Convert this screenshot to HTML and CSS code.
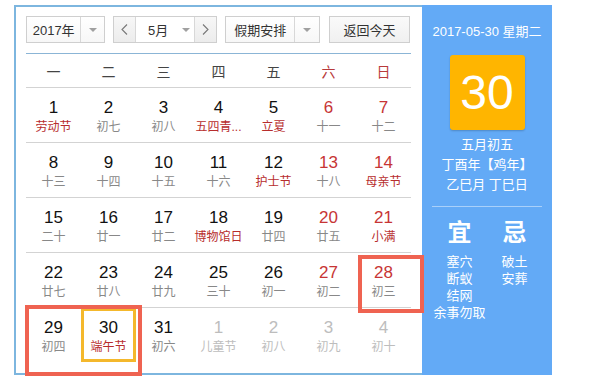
FILE: index.html
```html
<!DOCTYPE html>
<html lang="zh-CN">
<head>
<meta charset="UTF-8">
<title>万年历</title>
<link rel="stylesheet" href="styles.css">
</head>
<body>
<div class="calendar">
  <div class="cal-main">
    <div class="toolbar">
      <div class="select select-year">
        <span class="select-text">2017年</span>
        <span class="select-arrow"><i class="caret"></i></span>
      </div>
      <div class="month-group">
        <span class="nav-btn">
          <svg width="7" height="11" viewBox="0 0 7 11"><polyline points="6,0.5 1,5.5 6,10.5" fill="none" stroke="#777" stroke-width="1.1"/></svg>
        </span>
        <span class="month-select">
          <span class="month-text">5月</span>
          <i class="caret"></i>
        </span>
        <span class="nav-btn">
          <svg width="7" height="11" viewBox="0 0 7 11"><polyline points="1,0.5 6,5.5 1,10.5" fill="none" stroke="#777" stroke-width="1.1"/></svg>
        </span>
      </div>
      <div class="select select-holiday">
        <span class="select-text">假期安排</span>
        <span class="select-arrow"><i class="caret"></i></span>
      </div>
      <button type="button" class="today-btn">返回今天</button>
    </div>

    <div class="week-head">
      <span>一</span><span>二</span><span>三</span><span>四</span><span>五</span>
      <span class="weekend">六</span><span class="weekend">日</span>
    </div>

    <div class="days">
      <div class="day"><b>1</b><em class="fest">劳动节</em></div>
      <div class="day"><b>2</b><em>初七</em></div>
      <div class="day"><b>3</b><em>初八</em></div>
      <div class="day"><b>4</b><em class="fest">五四青...</em></div>
      <div class="day"><b>5</b><em class="fest">立夏</em></div>
      <div class="day weekend"><b>6</b><em>十一</em></div>
      <div class="day weekend"><b>7</b><em>十二</em></div>

      <div class="day"><b>8</b><em>十三</em></div>
      <div class="day"><b>9</b><em>十四</em></div>
      <div class="day"><b>10</b><em>十五</em></div>
      <div class="day"><b>11</b><em>十六</em></div>
      <div class="day"><b>12</b><em class="fest">护士节</em></div>
      <div class="day weekend"><b>13</b><em>十八</em></div>
      <div class="day weekend"><b>14</b><em class="fest">母亲节</em></div>

      <div class="day"><b>15</b><em>二十</em></div>
      <div class="day"><b>16</b><em>廿一</em></div>
      <div class="day"><b>17</b><em>廿二</em></div>
      <div class="day"><b>18</b><em class="fest">博物馆日</em></div>
      <div class="day"><b>19</b><em>廿四</em></div>
      <div class="day weekend"><b>20</b><em>廿五</em></div>
      <div class="day weekend"><b>21</b><em class="fest">小满</em></div>

      <div class="day"><b>22</b><em>廿七</em></div>
      <div class="day"><b>23</b><em>廿八</em></div>
      <div class="day"><b>24</b><em>廿九</em></div>
      <div class="day"><b>25</b><em>三十</em></div>
      <div class="day"><b>26</b><em>初一</em></div>
      <div class="day weekend"><b>27</b><em>初二</em></div>
      <div class="day weekend"><b>28</b><em>初三</em></div>

      <div class="day last-row"><b>29</b><em>初四</em></div>
      <div class="day last-row today"><b>30</b><em class="fest">端午节</em></div>
      <div class="day last-row"><b>31</b><em>初六</em></div>
      <div class="day last-row other"><b>1</b><em>儿童节</em></div>
      <div class="day last-row other"><b>2</b><em>初八</em></div>
      <div class="day last-row other"><b>3</b><em>初九</em></div>
      <div class="day last-row other"><b>4</b><em>初十</em></div>
    </div>
  </div>

  <div class="cal-side">
    <div class="side-date">2017-05-30 星期二</div>
    <div class="side-day">30</div>
    <div class="side-lunar">
      <p>五月初五</p>
      <p>丁酉年【鸡年】</p>
      <p>乙巳月 丁巳日</p>
    </div>
    <div class="side-line"></div>
    <div class="side-yiji">
      <div class="yiji-col">
        <div class="yiji-title">宜</div>
        <p>塞穴</p>
        <p>断蚁</p>
        <p>结网</p>
        <p>余事勿取</p>
      </div>
      <div class="yiji-col">
        <div class="yiji-title">忌</div>
        <p>破土</p>
        <p>安葬</p>
      </div>
    </div>
  </div>
</div>

<div class="mark mark-28"></div>
<div class="mark mark-week"></div>
</body>
</html>
```

FILE: styles.css
```css
body {
  margin: 0;
  background: #fff;
  font-family: "Liberation Sans", "Noto Sans CJK SC", sans-serif;
  color: #333;
}

.calendar {
  display: flex;
  margin: 5px 0 0 14px;
  width: 538px;
  height: 370px;
}

.cal-main {
  width: 385px;
  padding: 9px 11px 0 10px;
  border: 2px solid #7db6df;
  border-right: none;
}

/* toolbar */
.toolbar {
  display: flex;
  align-items: center;
  height: 27px;
  padding-bottom: 10px;
  border-bottom: 1px solid #8bb5d6;
  font-size: 13px;
}

.select {
  display: flex;
  height: 27px;
  box-sizing: border-box;
  border: 1px solid #cfcfcf;
  background: linear-gradient(#fff, #f7f7f7);
  margin-right: 8px;
}

.select-text {
  display: flex;
  align-items: center;
  justify-content: center;
}

.select-arrow {
  display: flex;
  align-items: center;
  justify-content: center;
  border-left: 1px solid #d8d8d8;
}

.select-year {
  width: 79px;
}

.select-year .select-text {
  width: 54px;
}

.select-year .select-arrow {
  width: 23px;
}

.select-holiday {
  width: 95px;
  margin-right: 9px;
}

.select-holiday .select-text {
  width: 69px;
}

.select-holiday .select-arrow {
  width: 24px;
}

.caret {
  width: 0;
  height: 0;
  border-left: 4px solid transparent;
  border-right: 4px solid transparent;
  border-top: 4px solid #a0a0a0;
}

.month-group {
  display: flex;
  height: 27px;
  box-sizing: border-box;
  border: 1px solid #cfcfcf;
  margin-right: 8px;
}

.nav-btn {
  display: flex;
  align-items: center;
  justify-content: center;
  width: 21px;
  background: linear-gradient(#f7f7f7, #ececec);
}

.month-select {
  display: flex;
  align-items: center;
  width: 58px;
  border-left: 1px solid #d8d8d8;
  border-right: 1px solid #d8d8d8;
  background: #fff;
}

.month-text {
  margin-left: 12px;
  margin-right: 14px;
}

.today-btn {
  width: 81px;
  height: 27px;
  padding: 0;
  border: 1px solid #cfcfcf;
  background: linear-gradient(#fafafa, #f0f0f0);
  font-family: inherit;
  font-size: 13px;
  color: #333;
}

/* week header */
.week-head {
  display: grid;
  grid-template-columns: repeat(7, 55px);
  height: 33px;
  border-bottom: 1px solid #d3d3d3;
  font-size: 14px;
  color: #444;
}

.week-head span {
  display: flex;
  align-items: center;
  justify-content: center;
}

.week-head .weekend {
  color: #b83a3a;
}

/* days */
.days {
  display: grid;
  grid-template-columns: repeat(7, 55px);
}

.day {
  display: flex;
  flex-direction: column;
  align-items: center;
  height: 54px;
  padding-top: 10px;
  box-sizing: border-box;
  border-bottom: 1px solid #d3d3d3;
  height: 55px;
}

.day.last-row {
  border-bottom: none;
  height: 54px;
}

.day b {
  font-weight: normal;
  font-size: 17px;
  line-height: 20px;
  color: #111;
}

.day em {
  font-style: normal;
  font-size: 12px;
  line-height: 18px;
  color: #888;
  white-space: nowrap;
}

.day em.fest {
  color: #b72d2d;
}

.day.weekend b {
  color: #c73535;
}

.day.other b,
.day.other em {
  color: #bdbdbd;
}

.day.today {
  box-shadow: inset 0 0 0 3px #f4b82c;
}

/* side panel */
.cal-side {
  width: 130px;
  background: #63aaf6;
  color: #fff;
  display: flex;
  flex-direction: column;
  align-items: center;
  padding-top: 17px;
  box-sizing: border-box;
}

.side-date {
  font-size: 13px;
  line-height: 20px;
}

.side-day {
  width: 75px;
  height: 75px;
  margin-top: 13px;
  background: #ffb500;
  border-radius: 3px;
  box-shadow: 0 1px 2px rgba(0, 0, 0, 0.2);
  display: flex;
  align-items: center;
  justify-content: center;
  font-size: 48px;
  color: #fff;
}

.side-lunar {
  margin-top: 5px;
  text-align: center;
  font-size: 13px;
  line-height: 20px;
}

.side-lunar p,
.yiji-col p {
  margin: 0;
}

.side-line {
  width: 110px;
  height: 1px;
  margin-top: 11px;
  background: rgba(255, 255, 255, 0.45);
}

.side-yiji {
  display: flex;
  margin-top: 11px;
}

.yiji-col {
  width: 55px;
  display: flex;
  flex-direction: column;
  align-items: center;
  font-size: 13px;
  line-height: 17px;
  white-space: nowrap;
}

.yiji-title {
  font-size: 24px;
  line-height: 30px;
  font-weight: bold;
  margin-bottom: 5px;
}

/* highlight marks drawn over the calendar */
.mark {
  position: absolute;
  box-sizing: border-box;
  border: 4px solid #ef6351;
}

.mark-28 {
  left: 358px;
  top: 255px;
  width: 66px;
  height: 58px;
}

.mark-week {
  left: 25px;
  top: 305px;
  width: 117px;
  height: 71px;
}
```
